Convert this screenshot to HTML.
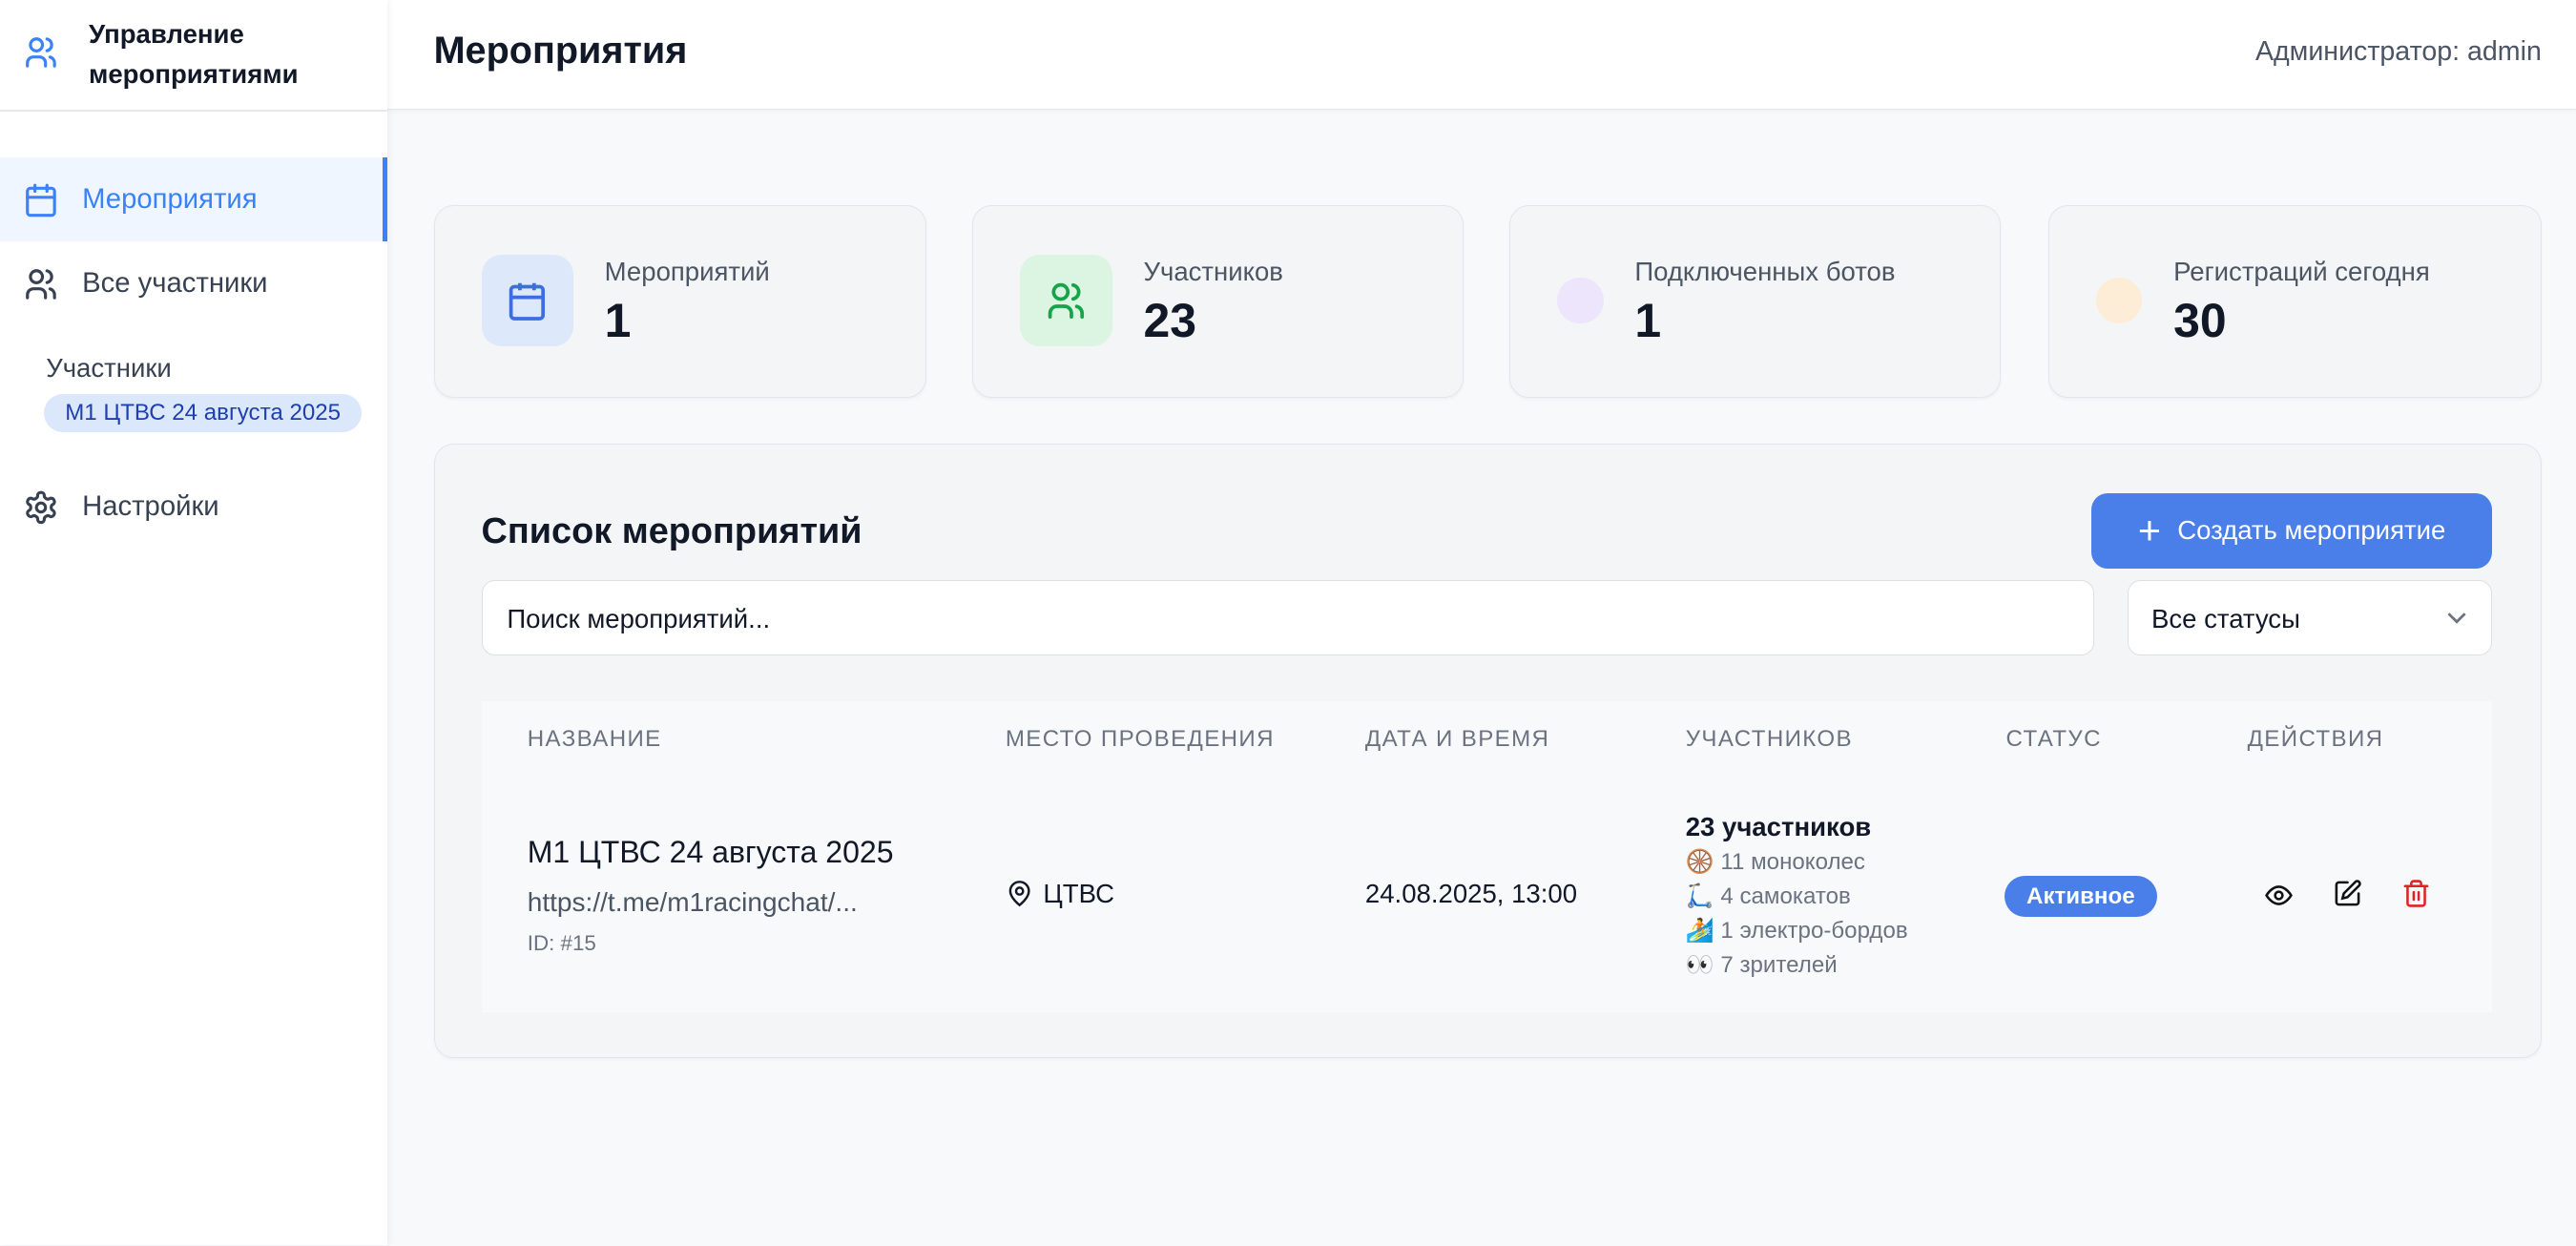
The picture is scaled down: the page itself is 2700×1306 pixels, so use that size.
<!DOCTYPE html>
<html><head><meta charset="utf-8"><style>
html{zoom:1.72194}
*{box-sizing:border-box;margin:0;padding:0}
body{width:1568px;height:758px;overflow:hidden;font-family:"Liberation Sans","Noto Sans CJK SC",sans-serif;background:#f8f9fb;color:#111827;position:relative}
.abs{position:absolute}
.sb{left:0;top:0;width:236px;height:758px;background:#fff;box-shadow:1px 0 4px rgba(0,0,0,.06);z-index:2}
.hd{left:236px;top:0;width:1332px;height:67px;background:#fff;border-bottom:1px solid #e5e7eb;box-shadow:0 1px 3px rgba(0,0,0,.05)}
.card{background:#f4f5f6;border:1px solid #e3e5e8;border-radius:12px;box-shadow:0 1px 2px rgba(0,0,0,.04)}
.ib{width:56px;height:56px;border-radius:12px;display:flex;align-items:center;justify-content:center}
.lbl{font-size:16px;color:#4b5563}
.num{font-size:29px;font-weight:bold;color:#111827}
.th{font-size:14px;color:#6b7280;letter-spacing:.8px;top:442px}
.sub{font-size:14px;color:#6b7280}
</style></head><body>
<div class="abs sb">
 <svg class="abs" style="left:14px;top:21px" width="22" height="22" viewBox="0 0 24 24" fill="none" stroke="#3b82f6" stroke-width="2" stroke-linecap="round"><circle cx="9" cy="7" r="4"/><path d="M3 21v-2a4 4 0 0 1 4-4h4a4 4 0 0 1 4 4v2"/><path d="M16 3.1a4 4 0 0 1 0 7.8M21 21v-2a4 4 0 0 0-3-3.9"/></svg>
 <div class="abs" style="left:54px;top:9px;font-size:16px;font-weight:bold;line-height:24px">Управление<br>мероприятиями</div>
 <div class="abs" style="left:0;top:67px;width:236px;height:1px;background:#e5e7eb"></div>
 <div class="abs" style="left:0;top:96px;width:236px;height:51px;background:#eff6ff;border-right:3px solid #3b82f6"></div>
 <svg class="abs" style="left:14px;top:111px" width="22" height="22" viewBox="0 0 24 24" fill="none" stroke="#3b82f6" stroke-width="2" stroke-linecap="round"><rect x="3" y="4" width="18" height="18" rx="2"/><path d="M16 2v4M8 2v4M3 10h18"/></svg>
 <div class="abs" style="left:50px;top:112px;font-size:17px;color:#3b82f6">Мероприятия</div>
 <svg class="abs" style="left:14px;top:162px" width="22" height="22" viewBox="0 0 24 24" fill="none" stroke="#374151" stroke-width="2" stroke-linecap="round"><circle cx="9" cy="7" r="4"/><path d="M3 21v-2a4 4 0 0 1 4-4h4a4 4 0 0 1 4 4v2"/><path d="M16 3.1a4 4 0 0 1 0 7.8M21 21v-2a4 4 0 0 0-3-3.9"/></svg>
 <div class="abs" style="left:50px;top:163px;font-size:17px;color:#374151">Все участники</div>
 <div class="abs" style="left:28px;top:215px;font-size:16px;color:#374151">Участники</div>
 <div class="abs" style="left:27px;top:240px;width:193px;height:23px;border-radius:12px;background:#dbe7fb;color:#1e40af;font-size:14px;line-height:23px;text-align:center">М1 ЦТВС 24 августа 2025</div>
 <svg class="abs" style="left:14px;top:298px" width="22" height="22" viewBox="0 0 24 24" fill="none" stroke="#374151" stroke-width="2"><circle cx="12" cy="12" r="3"/><path d="M12.2 2h-.4a2 2 0 0 0-2 2v.2a2 2 0 0 1-1 1.7l-.4.3a2 2 0 0 1-2 0l-.2-.1a2 2 0 0 0-2.7.7l-.2.4a2 2 0 0 0 .7 2.7l.2.1a2 2 0 0 1 1 1.7v.5a2 2 0 0 1-1 1.7l-.2.1a2 2 0 0 0-.7 2.7l.2.4a2 2 0 0 0 2.7.7l.2-.1a2 2 0 0 1 2 0l.4.3a2 2 0 0 1 1 1.7v.2a2 2 0 0 0 2 2h.4a2 2 0 0 0 2-2v-.2a2 2 0 0 1 1-1.7l.4-.3a2 2 0 0 1 2 0l.2.1a2 2 0 0 0 2.7-.7l.2-.4a2 2 0 0 0-.7-2.7l-.2-.1a2 2 0 0 1-1-1.7v-.5a2 2 0 0 1 1-1.7l.2-.1a2 2 0 0 0 .7-2.7l-.2-.4a2 2 0 0 0-2.7-.7l-.2.1a2 2 0 0 1-2 0l-.4-.3a2 2 0 0 1-1-1.7V4a2 2 0 0 0-2-2z"/></svg>
 <div class="abs" style="left:50px;top:299px;font-size:17px;color:#374151">Настройки</div>
</div>
<div class="abs hd"></div>
<div class="abs" style="left:264px;top:18px;font-size:23px;font-weight:bold">Мероприятия</div>
<div class="abs" style="right:21px;top:22px;font-size:16.6px;color:#4b5563">Администратор: admin</div>

<div class="abs card" style="left:264px;top:125px;width:300px;height:117px"></div>
<div class="abs ib" style="left:293px;top:155px;background:#dde8fb"><svg width="26" height="26" viewBox="0 0 24 24" fill="none" stroke="#3b6fe0" stroke-width="2"><rect x="3" y="4" width="18" height="18" rx="2"/><path d="M16 2v4M8 2v4M3 10h18"/></svg></div>
<div class="abs lbl" style="left:368px;top:156px">Мероприятий</div><div class="abs num" style="left:368px;top:178px">1</div>

<div class="abs card" style="left:592px;top:125px;width:299px;height:117px"></div>
<div class="abs ib" style="left:621px;top:155px;background:#dcf5e3"><svg width="26" height="26" viewBox="0 0 24 24" fill="none" stroke="#16a34a" stroke-width="2" stroke-linecap="round"><circle cx="9" cy="7" r="4"/><path d="M3 21v-2a4 4 0 0 1 4-4h4a4 4 0 0 1 4 4v2"/><path d="M16 3.1a4 4 0 0 1 0 7.8M21 21v-2a4 4 0 0 0-3-3.9"/></svg></div>
<div class="abs lbl" style="left:696px;top:156px">Участников</div><div class="abs num" style="left:696px;top:178px">23</div>

<div class="abs card" style="left:919px;top:125px;width:299px;height:117px"></div>
<div class="abs" style="left:948px;top:169px;width:28px;height:28px;border-radius:50%;background:#ede5fb"></div>
<div class="abs lbl" style="left:995px;top:156px">Подключенных ботов</div><div class="abs num" style="left:995px;top:178px">1</div>

<div class="abs card" style="left:1247px;top:125px;width:300px;height:117px"></div>
<div class="abs" style="left:1276px;top:169px;width:28px;height:28px;border-radius:50%;background:#fdecd6"></div>
<div class="abs lbl" style="left:1323px;top:156px">Регистраций сегодня</div><div class="abs num" style="left:1323px;top:178px">30</div>

<div class="abs card" style="left:264px;top:270px;width:1283px;height:374px"></div>
<div class="abs" style="left:293px;top:311px;font-size:22px;font-weight:bold">Список мероприятий</div>
<div class="abs" style="left:1273px;top:300px;width:244px;height:46px;border-radius:10px;background:#4a7ee8;color:#fff;font-size:16px;display:flex;align-items:center;justify-content:center;gap:10px"><span style="font-size:24px;font-weight:300;line-height:1">+</span>Создать мероприятие</div>
<div class="abs" style="left:293px;top:353px;width:982px;height:46px;background:#fff;border:1px solid #dde0e4;border-radius:8px;font-size:16px;padding:14px 15px;color:#111827">Поиск мероприятий...</div>
<div class="abs" style="left:1295px;top:353px;width:222px;height:46px;background:#fff;border:1px solid #dde0e4;border-radius:8px;font-size:16px;padding:14px 14px">Все статусы<svg class="abs" style="right:14px;top:17px" width="14" height="10" viewBox="0 0 14 10" fill="none" stroke="#6b7280" stroke-width="1.6"><path d="M2 3l5 5 5-5"/></svg></div>

<div class="abs" style="left:293px;top:427px;width:1224px;height:189px;background:#f8f9fb"></div>
<div class="abs th" style="left:321px">НАЗВАНИЕ</div>
<div class="abs th" style="left:612px">МЕСТО ПРОВЕДЕНИЯ</div>
<div class="abs th" style="left:831px">ДАТА И ВРЕМЯ</div>
<div class="abs th" style="left:1026px">УЧАСТНИКОВ</div>
<div class="abs th" style="left:1221px">СТАТУС</div>
<div class="abs th" style="left:1368px">ДЕЙСТВИЯ</div>

<div class="abs" style="left:321px;top:508px;font-size:18.6px">М1 ЦТВС 24 августа 2025</div>
<div class="abs" style="left:321px;top:540px;font-size:16.3px;color:#4b5563">https://t.me/m1racingchat/...</div>
<div class="abs" style="left:321px;top:567px;font-size:13px;color:#6b7280">ID: #15</div>
<svg class="abs" style="left:612px;top:535px" width="17" height="18" viewBox="0 0 24 24" fill="none" stroke="#111827" stroke-width="2"><path d="M20 10c0 6-8 12-8 12s-8-6-8-12a8 8 0 0 1 16 0z"/><circle cx="12" cy="10" r="3"/></svg>
<div class="abs" style="left:635px;top:535px;font-size:16px">ЦТВС</div>
<div class="abs" style="left:831px;top:535px;font-size:16px">24.08.2025, 13:00</div>
<div class="abs" style="left:1026px;top:494px;font-size:16px;font-weight:bold;color:#111827">23 участников</div>
<div class="abs sub" style="left:1026px;top:516px">🛞 11 моноколес</div>
<div class="abs sub" style="left:1026px;top:537px">🛴 4 самокатов</div>
<div class="abs sub" style="left:1026px;top:558px">🏄 1 электро-бордов</div>
<div class="abs sub" style="left:1026px;top:579px">👀 7 зрителей</div>
<div class="abs" style="left:1220px;top:533px;width:93px;height:25px;border-radius:13px;background:#4a7ee8;color:#fff;font-size:14px;font-weight:bold;line-height:25px;text-align:center">Активное</div>
<svg class="abs" style="left:1378px;top:536px" width="18" height="18" viewBox="0 0 24 24" fill="none" stroke="#111" stroke-width="2"><path d="M2 12s4-7 10-7 10 7 10 7-4 7-10 7S2 12 2 12z"/><circle cx="12" cy="12" r="3"/></svg>
<svg class="abs" style="left:1420px;top:535px" width="18" height="18" viewBox="0 0 24 24" fill="none" stroke="#111" stroke-width="2" stroke-linecap="round"><path d="M12 3H5a2 2 0 0 0-2 2v14a2 2 0 0 0 2 2h14a2 2 0 0 0 2-2v-7"/><path d="M18.4 2.6a2.1 2.1 0 0 1 3 3L12 15l-4 1 1-4z"/></svg>
<svg class="abs" style="left:1462px;top:535px" width="18" height="18" viewBox="0 0 24 24" fill="none" stroke="#dc2626" stroke-width="2" stroke-linecap="round"><path d="M3 6h18M19 6v14a2 2 0 0 1-2 2H7a2 2 0 0 1-2-2V6M8 6V4a2 2 0 0 1 2-2h4a2 2 0 0 1 2 2v2M10 11v6M14 11v6"/></svg>
</body></html>
